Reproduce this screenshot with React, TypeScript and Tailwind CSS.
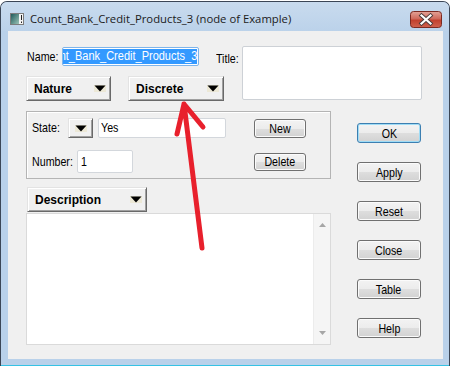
import React from "react";

const narrow =
  "inline-block font-['Liberation_Sans',Arial,sans-serif] text-[13px] leading-none text-black scale-x-[0.82]";

function Tri() {
  return (
    <svg width="12" height="7" viewBox="0 0 12 7" className="shrink-0">
      <rect width="12" height="7" fill="#ece8d6" />
      <path d="M0.5 0.5H11.5L6 6.5Z" fill="#000" />
    </svg>
  );
}

function DropButton({ label, className }: { label: string; className: string }) {
  return (
    <div
      className={`flex h-[25px] shrink-0 items-center justify-between border border-t-[#e3e3e3] border-l-[#e3e3e3] border-r-[#696969] border-b-[#696969] bg-[#f0f0f0] pl-[7px] pr-[4px] shadow-[inset_1px_1px_0_#ffffff,inset_-1px_-1px_0_#a0a0a0] ${className}`}
    >
      <span className="font-['Liberation_Sans',Arial,sans-serif] text-[12px] font-bold leading-none text-black">
        {label}
      </span>
      <Tri />
    </div>
  );
}

function WinButton({
  label,
  className,
  def,
}: {
  label: string;
  className: string;
  def?: boolean;
}) {
  return (
    <div
      className={`flex shrink-0 items-center justify-center rounded-[3px] border bg-[linear-gradient(#f3f3f3_0%,#ececec_50%,#dedede_50%,#d2d2d2_100%)] ${
        def
          ? "border-[#3c7fb1] shadow-[inset_0_0_0_1px_#9fdcf6]"
          : "border-[#707070] shadow-[inset_0_0_0_1px_#fbfbfb]"
      } ${className}`}
    >
      <span className={`${narrow} origin-center`}>{label}</span>
    </div>
  );
}

function Label({ text, className }: { text: string; className: string }) {
  return (
    <div className={`flex shrink-0 items-center leading-none ${className}`}>
      <span className={`${narrow} origin-left whitespace-nowrap`}>{text}</span>
    </div>
  );
}

export default function App() {
  return (
    <div className="relative h-[366px] w-[453px] overflow-hidden bg-white">
      {/* window */}
      <div className="mt-[1px] flex h-[365px] w-[450px] flex-col rounded-t-[7px] border border-b-0 border-[#3b4656] bg-[#b9d1ea]">
        {/* title bar */}
        <div className="flex h-[29px] items-center rounded-t-[6px] bg-[linear-gradient(#c9dbee,#bbd2ea)] pt-[5px] pl-[9px] pr-[7px]">
          <svg width="14" height="12" viewBox="0 0 14 12" className="shrink-0">
            <defs>
              <linearGradient id="ig" x1="0" y1="0" x2="1" y2="1">
                <stop offset="0" stopColor="#1f5a5a" />
                <stop offset="1" stopColor="#9cc4b8" />
              </linearGradient>
            </defs>
            <rect x="0.5" y="0.5" width="13" height="11" fill="#f4f4f4" stroke="#7c7c7c" />
            <rect x="1" y="1" width="8" height="10" fill="url(#ig)" />
            <rect x="11" y="2" width="1" height="5" fill="#222" />
            <rect x="11" y="8.5" width="1" height="1.5" fill="#222" />
          </svg>
          <span className="ml-[6px] font-['Open_Sans',sans-serif] text-[11.3px] leading-none text-[#1b1b1b]">
            Count_Bank_Credit_Products_3 (node of Example)
          </span>
          <svg width="32" height="17" viewBox="0 0 32 17" className="ml-auto shrink-0">
            <defs>
              <linearGradient id="cg" x1="0" y1="0" x2="0" y2="1">
                <stop offset="0" stopColor="#e3a398" />
                <stop offset="0.45" stopColor="#cf6a5c" />
                <stop offset="0.55" stopColor="#c2412f" />
                <stop offset="1" stopColor="#d0624f" />
              </linearGradient>
            </defs>
            <rect x="0.5" y="0.5" width="31" height="16" rx="3" fill="url(#cg)" stroke="#7b2a22" />
            <path d="M11.5 4.5L20.5 12.5M20.5 4.5L11.5 12.5" stroke="#4a3a3a" strokeWidth="4" strokeLinecap="square" />
            <path d="M11.5 4.5L20.5 12.5M20.5 4.5L11.5 12.5" stroke="#ffffff" strokeWidth="2.2" strokeLinecap="square" />
          </svg>
        </div>

        {/* client */}
        <div className="ml-[7px] mr-[6px] flex h-[328px] flex-col bg-[#f0f0f0] pl-[18px] pt-[15px]">
          {/* top section */}
          <div className="flex h-[55px] items-start">
            <div className="flex w-[190px] shrink-0 flex-col">
              <div className="mt-[1px] flex h-[19px] items-center">
                <Label text="Name:" className="ml-[1px] h-[19px] w-[35px]" />
                <div className="flex h-[19px] w-[137px] shrink-0 items-center justify-end overflow-hidden rounded-[2px] border border-[#7eb4ea] bg-white pr-[1px]">
                  <span className="inline-block origin-right scale-x-[0.88] whitespace-nowrap bg-[#3399ff] font-['Liberation_Sans',Arial,sans-serif] text-[12.5px] leading-[15px] text-white">
                    Count_Bank_Credit_Products_3
                  </span>
                </div>
              </div>
              <div className="mt-[10px] flex">
                <DropButton label="Nature" className="w-[85px]" />
                <DropButton label="Discrete" className="ml-[17px] w-[96px]" />
              </div>
            </div>
            <Label text="Title:" className="mt-[2px] h-[20px] w-[26px]" />
            <div className="h-[54px] w-[180px] shrink-0 rounded-[2px] border border-[#cdd1d6] bg-white" />
          </div>

          {/* bottom section */}
          <div className="mt-[10px] flex">
            <div className="flex w-[305px] shrink-0 flex-col">
              {/* state group */}
              <div className="flex h-[68px] flex-col border border-[#b4b4b4] pl-[5px] pt-[5px] shadow-[inset_1px_1px_0_#ffffff]">
                <div className="flex h-[21px] items-center">
                  <Label text="State:" className="h-[21px] w-[36px]" />
                  <div className="mt-[1px] flex h-[20px] w-[25px] shrink-0 items-center justify-center border border-t-[#e3e3e3] border-l-[#e3e3e3] border-r-[#696969] border-b-[#696969] shadow-[inset_1px_1px_0_#ffffff,inset_-1px_-1px_0_#a0a0a0]">
                    <Tri />
                  </div>
                  <div className="ml-[5px] flex h-[20px] w-[128px] shrink-0 items-center rounded-[2px] border border-[#d3d7dc] bg-white pl-[2px]">
                    <span className={`${narrow} origin-left`}>Yes</span>
                  </div>
                  <WinButton label="New" className="ml-[28px] mt-[1px] h-[19px] w-[52px]" />
                </div>
                <div className="mt-[12px] flex h-[23px] items-center">
                  <Label text="Number:" className="h-[23px] w-[45px]" />
                  <div className="flex h-[23px] w-[56px] shrink-0 items-center rounded-[2px] border border-[#d3d7dc] bg-white pl-[3px]">
                    <span className={`${narrow} origin-left`}>1</span>
                  </div>
                  <WinButton label="Delete" className="ml-[121px] h-[18px] w-[52px]" />
                </div>
              </div>

              <DropButton label="Description" className="ml-[1px] mt-[8px] w-[120px]" />

              {/* description area */}
              <div className="mt-[1px] flex h-[132px] border border-[#dadada] bg-white">
                <div className="flex-1" />
                <div className="flex w-[17px] flex-col items-center justify-between border-l border-[#ececec] bg-[#f5f5f5] py-[9px]">
                  <svg width="7" height="4" viewBox="0 0 7 4">
                    <path d="M0 4L3.5 0L7 4Z" fill="#a6a6a6" />
                  </svg>
                  <svg width="7" height="4" viewBox="0 0 7 4">
                    <path d="M0 0L3.5 4L7 0Z" fill="#a6a6a6" />
                  </svg>
                </div>
              </div>
            </div>

            {/* right buttons */}
            <div className="ml-[26px] flex flex-col gap-[19px] pt-[12px]">
              <WinButton label="OK" className="h-[20px] w-[64px]" def />
              <WinButton label="Apply" className="h-[20px] w-[64px]" />
              <WinButton label="Reset" className="h-[20px] w-[64px]" />
              <WinButton label="Close" className="h-[20px] w-[64px]" />
              <WinButton label="Table" className="h-[20px] w-[64px]" />
              <WinButton label="Help" className="h-[20px] w-[64px]" />
            </div>
          </div>
        </div>
        <div className="h-[6px]" />
        <div className="h-[1px] bg-[#35c2e4]" />
      </div>

      {/* red annotation arrow */}
      <svg
        className="pointer-events-none absolute left-0 top-0"
        width="453"
        height="366"
        viewBox="0 0 453 366"
      >
        <path
          d="M202 248L184 104M177 134L184 104L203 127"
          fill="none"
          stroke="#e8202c"
          strokeWidth="5"
          strokeLinecap="round"
          strokeLinejoin="round"
        />
      </svg>
    </div>
  );
}
